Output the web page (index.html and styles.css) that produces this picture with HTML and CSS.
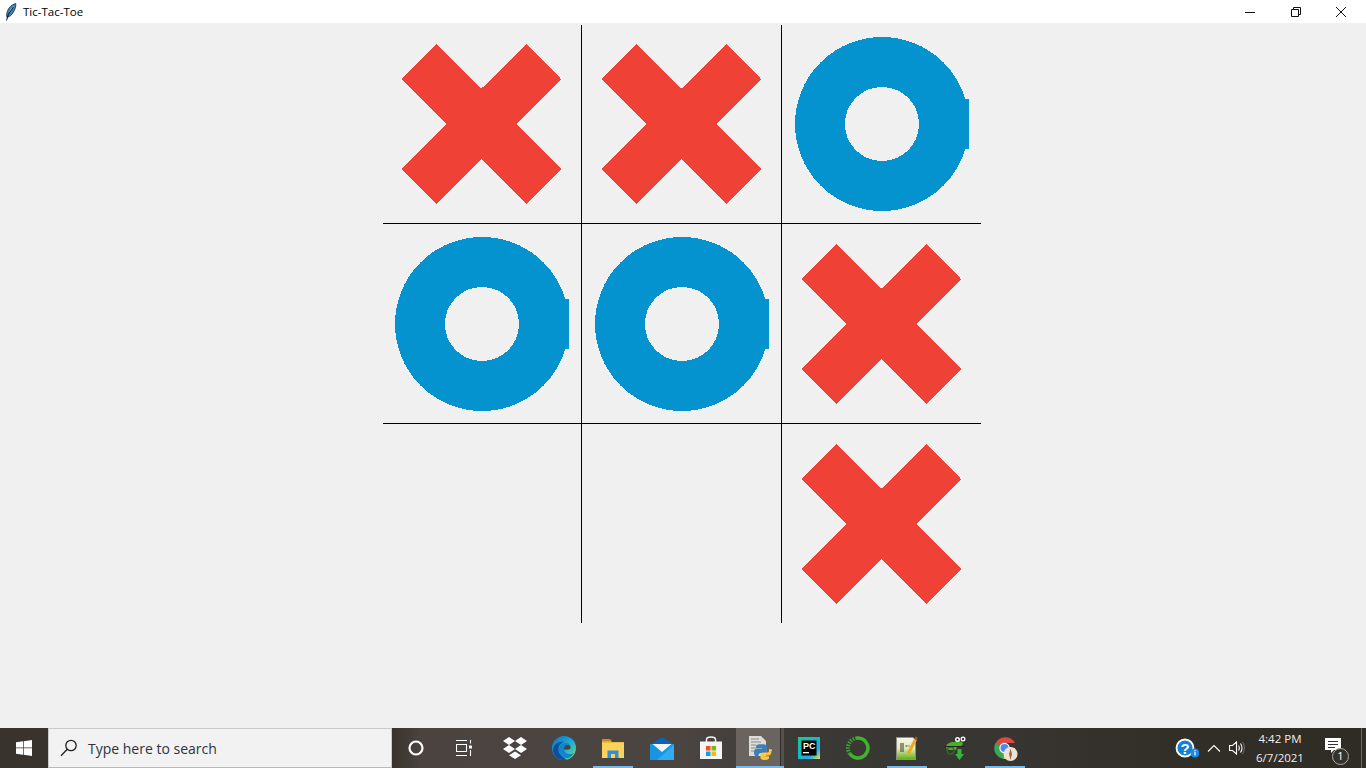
FILE: index.html
```html
<!DOCTYPE html>
<html lang="en">
<head>
<meta charset="utf-8">
<title>Tic-Tac-Toe</title>
<link rel="stylesheet" href="styles.css">
</head>
<body>
<div class="screen">
  <header class="titlebar">
    <svg class="app-icon" width="16" height="18" viewBox="0 0 16 18">
      <path class="feather" d="M12.800 .5C8.500 1.500 5.500 5 4.300 8.500 3.500 11 3.500 12.500 4 14.500c3.500-1 5.500-3.500 7-6.500C12.300 5.500 13 3 12.800 .5z"/>
      <path class="feather-light" d="M11 3C8.500 4.500 6.800 7 6 10c1.800-1.500 3.500-4 5-7z"/>
      <path class="quill" d="M10.500 4 5.500 11 3.500 17.500"/>
    </svg>
    <span class="title">Tic-Tac-Toe</span>
    <div class="win-controls">
      <button class="win-btn"><svg width="12" height="12" viewBox="0 0 12 12"><path class="glyph" d="M1 6.500h10"/></svg></button>
      <button class="win-btn"><svg width="12" height="12" viewBox="0 0 12 12"><path class="glyph" d="M1.500 3.500h7v7h-7zM3.500 3.500v-2h7v7h-2"/></svg></button>
      <button class="win-btn"><svg width="12" height="12" viewBox="0 0 12 12"><path class="glyph" d="M1 1l10 10M11 1 1 11"/></svg></button>
    </div>
  </header>

  <main class="window-body">
    <svg class="board" width="604" height="604" viewBox="0 0 604 604">
      <defs>
        <polygon id="cross" class="x-mark" points="55.500,21 100.500,65.500 145.500,21 180,56 136,101 180,146 145.500,181 100.500,136 55.500,181 21,146 65,101 21,56"/>
        <g id="nought">
          <circle class="o-ring" cx="101" cy="101" r="62"/>
          <rect class="o-nib" x="183" y="76" width="5" height="50"/>
        </g>
      </defs>
      <rect class="grid-line" x="200" y="2" width="1" height="598"/>
      <rect class="grid-line" x="400" y="2" width="1" height="598"/>
      <rect class="grid-line" x="2" y="200" width="598" height="1"/>
      <rect class="grid-line" x="2" y="400" width="598" height="1"/>
      <use href="#cross"/>
      <use href="#cross" x="200"/>
      <use href="#nought" x="400"/>
      <use href="#nought" y="200"/>
      <use href="#nought" x="200" y="200"/>
      <use href="#cross" x="400" y="200"/>
      <use href="#cross" x="400" y="400"/>
    </svg>
  </main>

  <footer class="taskbar">
    <div class="start">
      <svg width="16" height="16" viewBox="0 0 16 16"><path class="white" d="M0 2.300 7 1.300V7.600H0zM7.700 1.200 16 0V7.600H7.700zM0 8.300H7V14.700L0 13.700zM7.700 8.300H16V16L7.700 14.800z"/></svg>
    </div>
    <div class="search">
      <svg width="18" height="18" viewBox="0 0 18 18"><circle class="search-glyph" cx="11" cy="6.500" r="5.200"/><path class="search-glyph" d="M7.300 10.300 1 16.700"/></svg>
      <span class="search-text">Type here to search</span>
    </div>
    <div class="tool"><svg width="16" height="16" viewBox="0 0 16 16"><circle class="ring-white" cx="8" cy="8" r="6.500"/></svg></div>
    <div class="tool tool-last"><svg width="16" height="16" viewBox="0 0 16 16"><path class="thin-white" d="M0 .500h11M0 15.500h11M.5 4.500h10v7H.5zM14.500 0v3.500M14.500 10v6"/><rect class="white" x="13" y="5.500" width="3" height="3"/></svg></div>

    <div class="app"><svg width="24" height="22" viewBox="0 0 24 22"><path class="white" d="M6 0l6 4-6 4-6-4zM18 0l6 4-6 4-6-4zM6 8l6 4-6 4-6-4zM18 8l6 4-6 4-6-4zM12 14.500l6 3.800-6 3.700-6-3.700z"/></svg></div>

    <div class="app"><svg width="24" height="24" viewBox="0 0 24 24">
      <defs>
        <linearGradient id="edgeTop" x1="0" y1="0" x2="1" y2="1"><stop offset="0" stop-color="#0c6fc0"/><stop offset=".55" stop-color="#1fb0d8"/><stop offset="1" stop-color="#7fdc5a"/></linearGradient>
      </defs>
      <circle cx="12" cy="12" r="12" fill="url(#edgeTop)"/>
      <path class="edge-dark" d="M1 15C1 8 7 5 12 6 8 7 6 10 6.500 14c.5 4 4 7.500 8.500 9.500C8 25.500 2 21 1 15z"/>
      <path class="edge-mid" d="M7 13c0-3.500 3-6 6.500-6s5 2 5 4c0 1.500-1 2.500-2.500 2.500h-4c0 3 3 4.500 6 4.500 1.500 0 3-.5 4-1-2 3.500-5 5.500-8 5C10 22 7 18 7 13z"/>
      <path class="edge-light" d="M12 13.500c-.3-2.500 1.500-4.500 3.500-4.500 1.800 0 3 1.200 3 2.500s-1 2-2.500 2z"/>
    </svg></div>

    <div class="app open"><svg width="22" height="20" viewBox="0 0 22 20">
      <path class="folder-back" d="M0 1.500h8l2 2.500h12v3H0z"/>
      <path class="folder-tab" d="M0 1h8l1.500 2H0z"/>
      <path class="folder-front" d="M0 4.500h22V20H0z"/>
      <path class="folder-blue" d="M5.500 12.500h11V20h-3.500v-4h-4v4H5.500z"/>
    </svg></div>

    <div class="app"><svg width="24" height="23" viewBox="0 0 24 23">
      <path class="mail-dark" d="M12 0 24 7.500H0z"/>
      <path class="mail-body" d="M0 7h24v16H0z"/>
      <path class="mail-paper" d="M2.500 7h19L12 15z"/>
      <path class="mail-front" d="M24 7.500V23H7z"/>
    </svg></div>

    <div class="app"><svg width="24" height="24" viewBox="0 0 24 24">
      <path class="store-handle" d="M7.500 6V3.500C7.500 2 9 1 12 1s4.500 1 4.500 2.500V6"/>
      <path class="store-bag" d="M1 5.500h22V23H1z"/>
      <rect class="ms-red" x="7" y="10" width="4.500" height="4.500"/>
      <rect class="ms-green" x="12.500" y="10" width="4.500" height="4.500"/>
      <rect class="ms-blue" x="7" y="15.500" width="4.500" height="4.500"/>
      <rect class="ms-yellow" x="12.500" y="15.500" width="4.500" height="4.500"/>
    </svg></div>

    <div class="app open active"><svg width="24" height="24" viewBox="0 0 24 24">
      <path class="doc" d="M1 0h12l5 5v15H1z"/>
      <path class="doc-lines" d="M3 3h8M3 6h10M3 9h5M3 12h5M3 15h5"/>
      <path class="py-blue" d="M8 12c0-2 0-3 2-3.500 2-.5 5-.5 7 0 1.500.4 2 1.500 2 3v3.500c0 1.500-1 2-2.500 2H13c-1.500 0-2.500 1-2.500 2.500v1H9c-1.500 0-3-1-3-4s1.500-4 3-4h5V12z"/>
      <path class="py-yellow" d="M23.500 15c0 3-1.500 4.500-3 4.500H16v.8h5v2c0 1-2 1.700-4 1.700s-4.500-.7-4.500-2v-3c0-1.500 1-2.500 2.500-2.500h4.500c1.200 0 1.500-1 1.500-2v-1.500h1c1.500 0 2.500 1 2.500 2z"/>
    </svg></div>

    <div class="app"><svg width="22" height="22" viewBox="0 0 22 22">
      <defs>
        <linearGradient id="pcFrame" x1="0" y1="0" x2="1" y2="1"><stop offset="0" stop-color="#1fc98a"/><stop offset=".45" stop-color="#18b8c8"/><stop offset=".72" stop-color="#22a8e8"/><stop offset="1" stop-color="#e6e04a"/></linearGradient>
      </defs>
      <rect width="22" height="22" fill="url(#pcFrame)"/>
      <rect class="pc-ink" x="3.500" y="3.500" width="15" height="15"/>
      <text class="pc-text" x="5" y="11.500">PC</text>
      <rect class="white" x="5" y="15" width="6" height="1.300"/>
    </svg></div>

    <div class="app"><svg width="24" height="24" viewBox="0 0 24 24">
      <path class="ring-green" d="M10 2.200A10 10 0 1 1 3.800 17.800"/>
      <path class="ring-dots" d="M3.800 17.800A10 10 0 0 1 10 2.200"/>
    </svg></div>

    <div class="app open"><svg width="24" height="24" viewBox="0 0 24 24">
      <defs>
        <linearGradient id="nppPage" x1="0" y1="0" x2="0" y2="1"><stop offset="0" stop-color="#f6f6ea"/><stop offset=".5" stop-color="#e3eab0"/><stop offset="1" stop-color="#62b020"/></linearGradient>
      </defs>
      <path class="npp-edge" d="M1 1h17l3 3v20H1z"/>
      <path fill="url(#nppPage)" d="M2 2h16l2 2v19H2z"/>
      <path class="npp-ink" d="M6 7v9M8 7v9M10.500 10h2M13.500 10h1"/>
      <path class="npp-pencil" d="M20.500 3.500 13 18"/>
      <path class="npp-tip" d="M20.500 .5 23 2l-1 2-2.500-1.300z"/>
    </svg></div>

    <div class="app"><svg width="24" height="26" viewBox="0 0 24 26">
      <path class="gecko" d="M2 12c0-3 4-5 8-5 3 0 6-1 8 0l1 2c-1 2-3 3-6 3l-1 3H6c-2 0-4-1-4-3z"/>
      <circle class="white" cx="13.500" cy="4.500" r="2.500"/>
      <circle class="white" cx="19" cy="4" r="2.500"/>
      <circle class="pc-ink" cx="13.500" cy="4.500" r="1"/>
      <circle class="pc-ink" cx="19" cy="4" r="1"/>
      <circle class="gecko-tail" cx="6.500" cy="15.500" r="3.500"/>
      <path class="gecko-arrow" d="M13.500 14h4v5h2.500l-4.500 6-4.500-6h2.500z"/>
      <path class="gecko-line" d="M0 11.500h21"/>
    </svg></div>

    <div class="app open"><svg width="26" height="26" viewBox="-.5 -1 26 26">
      <path class="ch-red" d="M12 12 3 7.500A11 11 0 0 1 22.500 7H12z"/>
      <path class="ch-green" d="M12 12 3 7A11 11 0 0 0 11 23l4-7z"/>
      <path class="ch-yellow" d="M13 12h9.500A11 11 0 0 1 11 23z"/>
      <circle class="white" cx="12" cy="12" r="5.200"/>
      <circle class="ch-blue" cx="12" cy="12" r="4"/>
      <circle class="ch-badge" cx="18" cy="18" r="7"/>
      <path class="ch-badge-mark" d="M18 12.500l1.500 5.500-1.500 6-1.500-6z"/>
    </svg></div>

    <div class="tray">
      <svg class="tray-help" width="24" height="24" viewBox="0 0 24 24">
        <circle class="help-disc" cx="10" cy="12" r="8.500"/>
        <text class="help-q" x="10" y="17.500">?</text>
        <circle class="help-badge" cx="20" cy="17" r="4.500"/>
        <rect class="white" x="19.400" y="15.800" width="1.200" height="3.600"/>
        <rect class="white" x="19.400" y="14" width="1.200" height="1.200"/>
      </svg>
      <svg class="tray-chev" width="14" height="8" viewBox="0 0 14 8"><path class="thin-white" d="M1 7.500 7 1.500l6 6"/></svg>
      <svg class="tray-vol" width="16" height="14" viewBox="0 0 16 14"><path class="thin-white" d="M.5 4.500h3l4-3.500v12l-4-3.500h-3zM9.500 4.500c1 1.500 1 3.500 0 5M11.500 2.500c2 2.500 2 6.500 0 9"/><path class="thin-dim" d="M13.500 1c2.500 3.500 2.500 8.500 0 12"/></svg>
      <div class="clock"><span>4:42 PM</span><span>6/7/2021</span></div>
      <div class="notify">
        <svg width="17" height="16" viewBox="0 0 17 16"><path class="white" d="M0 0h16v12h-7l-3 3v-3H0z"/><path class="note-lines" d="M3 3.500h10M3 6.500h10M3 9.500h7"/></svg>
        <span class="notify-count">1</span>
      </div>
      <div class="show-desktop"></div>
    </div>
  </footer>
</div>
</body>
</html>
```
FILE: styles.css
```css
* { box-sizing: border-box; }
html, body { margin: 0; padding: 0; height: 100%; overflow: hidden; }
body { font-family: "Open Sans", "Liberation Sans", sans-serif; background: #f0f0f0; }

.screen { width: 1366px; height: 768px; display: flex; flex-direction: column; }

/* Title bar */
.titlebar { height: 23px; flex: none; background: #fff; display: flex; align-items: center; }
.app-icon { margin: 0 0 0 3px; flex: none; }
.feather { fill: #3f86bd; stroke: #12233a; stroke-width: .8; }
.feather-light { fill: #9cc7e4; }
.quill { fill: none; stroke: #101010; stroke-width: 1; }
.title { margin-left: 4px; font-size: 11.500px; color: #000; white-space: nowrap; }
.win-controls { margin-left: auto; padding-right: 2px; display: flex; }
.win-btn { width: 45.500px; height: 23px; padding: 0; border: 0; background: none; display: flex; align-items: center; justify-content: center; }
.glyph { fill: none; stroke: #111; stroke-width: 1; }

/* Board */
.window-body { flex: 1; display: flex; justify-content: center; align-items: flex-start; background: #f0f0f0; }
.board { display: block; shape-rendering: crispEdges; }
.grid-line { fill: #000; }
.x-mark { fill: #f04136; }
.o-ring { fill: none; stroke: #0593d0; stroke-width: 50; }
.o-nib { fill: #0593d0; }

/* Taskbar */
.taskbar { height: 40px; flex: none; display: flex; align-items: stretch; color: #fff;
  background: linear-gradient(90deg, #38332c 0, #38332c 392px, #4a4340 420px, #4b4542 680px, #3b3935 800px, #373531 1020px, #322e28 1170px, #2f2b25 100%); }
.start { width: 48px; display: flex; align-items: center; justify-content: center; }
.search { width: 344px; display: flex; align-items: center; padding-left: 11px; background: #f2f2f2; border: 1px solid #c9c9c9; border-bottom-color: #b8b8b8; }
.search-glyph { fill: none; stroke: #222; stroke-width: 1.300; }
.search-text { margin-left: 10px; font-size: 14px; color: #2b3440; white-space: nowrap; }
.tool { width: 48px; display: flex; align-items: center; justify-content: center; }
.tool-last { margin-right: 2.500px; }
.app { width: 49px; position: relative; display: flex; align-items: center; justify-content: center; }
.app.open::after { content: ""; position: absolute; left: 4px; right: 5px; bottom: 0; height: 2px; background: #76b9ed; }
.app.active { background: linear-gradient(90deg, #696460 0, #696460 44px, #2d2b28 44px, #2d2b28 45px, #55524e 45px, #55524e 48px, transparent 48px); }
.app.active::after { left: 0; right: 1px; }

.white { fill: #fff; }
.ring-white { fill: none; stroke: #fff; stroke-width: 2.200; }
.thin-white { fill: none; stroke: #fff; stroke-width: 1.100; }
.thin-dim { fill: none; stroke: #77736d; stroke-width: 1; }

.edge-dark { fill: #0b4f9e; }
.edge-mid { fill: #1284d0; }
.edge-light { fill: #4a4340; }

.folder-back { fill: #e0a92e; }
.folder-tab { fill: #c98f1c; }
.folder-front { fill: #fbd35c; }
.folder-blue { fill: #2f8fd8; }

.mail-dark { fill: #0a63b4; }
.mail-body { fill: #1795e4; }
.mail-paper { fill: #f2f6fa; }
.mail-front { fill: #2eaef0; }

.store-handle { fill: none; stroke: #f2f2f2; stroke-width: 1.500; }
.store-bag { fill: #f5f5f5; }
.ms-red { fill: #f25022; }
.ms-green { fill: #7fba00; }
.ms-blue { fill: #00a4ef; }
.ms-yellow { fill: #ffb900; }

.doc { fill: #dcdcd9; }
.doc-lines { fill: none; stroke: #8d8d8a; stroke-width: 1; }
.py-blue { fill: #3b7fb8; }
.py-yellow { fill: #fdc73c; }

.pc-ink { fill: #000; }
.pc-text { fill: #fff; font-family: "Liberation Sans", sans-serif; font-size: 9px; font-weight: 700; }

.ring-green { fill: none; stroke: #3fb52c; stroke-width: 3.500; }
.ring-dots { fill: none; stroke: #3aa02c; stroke-width: 4; stroke-dasharray: 1.500 1.200; }

.npp-edge { fill: #8f8f86; }
.npp-ink { fill: none; stroke: #333; stroke-width: 1; }
.npp-pencil { fill: none; stroke: #f0a824; stroke-width: 3; }
.npp-tip { fill: #b8423a; }

.gecko { fill: #49b02c; }
.gecko-tail { fill: none; stroke: #2f6e22; stroke-width: 1.500; }
.gecko-arrow { fill: #35b53a; }
.gecko-line { fill: none; stroke: #26261f; stroke-width: 1; }

.ch-red { fill: #dd4b3e; }
.ch-green { fill: #3aa757; }
.ch-yellow { fill: #f6c42c; }
.ch-blue { fill: #4a8af0; }
.ch-badge { fill: #ece3d8; }
.ch-badge-mark { fill: #a8642f; }

/* Tray */
.tray { margin-left: auto; display: flex; align-items: center; height: 100%; }
.tray-help { flex: none; }
.help-disc { fill: #1480d4; stroke: #fff; stroke-width: 1.800; }
.help-q { fill: #fff; font-family: "Liberation Sans", sans-serif; font-size: 15px; font-weight: 700; text-anchor: middle; }
.help-badge { fill: #1b8ae0; }
.tray-chev { margin-left: 8px; flex: none; }
.tray-vol { margin-left: 8px; flex: none; }
.clock { width: 62px; margin-left: 4px; display: flex; flex-direction: column; align-items: center; font-size: 11.500px; line-height: 19px; color: #eee; }
.notify { position: relative; width: 50px; height: 100%; display: flex; align-items: center; justify-content: center; padding-right: 6px; padding-bottom: 4px; }
.note-lines { fill: none; stroke: #333; stroke-width: 1; }
.notify-count { position: absolute; right: 12px; bottom: 3px; width: 17px; height: 17px; border: 1.500px solid #a8a8a8; border-radius: 50%; background: #35322c; font-size: 11px; line-height: 14px; text-align: center; color: #fff; }
.show-desktop { width: 5px; height: 100%; border-left: 1px solid #6b6762; }
```
